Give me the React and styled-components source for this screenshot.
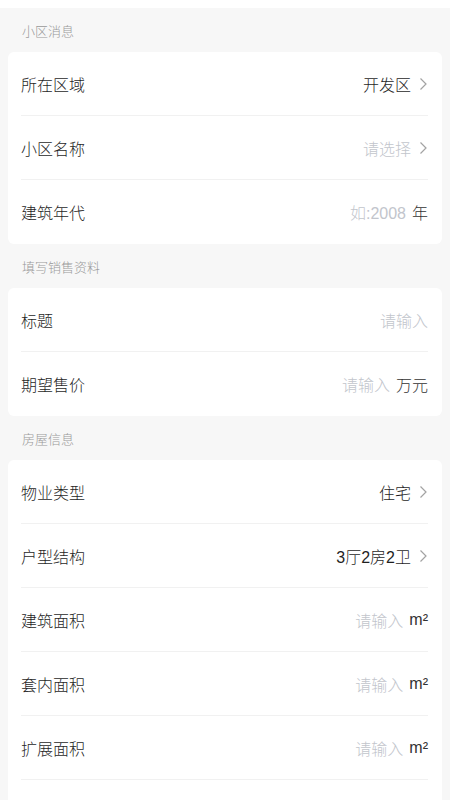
import React from "react";
import styled, { createGlobalStyle } from "styled-components";

const GlobalStyle = createGlobalStyle`
  html, body {
    margin: 0;
    padding: 0;
    background: #f7f7f7;
    font-family: "Liberation Sans", "Noto Sans CJK SC", sans-serif;
  }
`;

const sections = [
  {
    title: "小区消息",
    rows: [
      { label: "所在区域", value: "开发区", arrow: true },
      { label: "小区名称", placeholder: "请选择", arrow: true },
      { label: "建筑年代", placeholder: "如:2008", unit: "年" },
    ],
  },
  {
    title: "填写销售资料",
    rows: [
      { label: "标题", placeholder: "请输入" },
      { label: "期望售价", placeholder: "请输入", unit: "万元" },
    ],
  },
  {
    title: "房屋信息",
    rows: [
      { label: "物业类型", value: "住宅", arrow: true },
      { label: "户型结构", value: "3厅2房2卫", arrow: true },
      { label: "建筑面积", placeholder: "请输入", unit: "m²" },
      { label: "套内面积", placeholder: "请输入", unit: "m²" },
      { label: "扩展面积", placeholder: "请输入", unit: "m²" },
      { label: "所在楼层", placeholder: "请输入", unit: "层" },
    ],
  },
];

const Chevron = () => (
  <ArrowIcon viewBox="0 0 10 14" width="10" height="14">
    <polyline points="2.5,1.5 8,7 2.5,12.5" fill="none" stroke="#a3a3a3" strokeWidth="1.2" />
  </ArrowIcon>
);

export default function App() {
  return (
    <Page>
      <GlobalStyle />
      <TopStrip />
      {sections.map((section) => (
        <Section key={section.title}>
          <SectionTitle>{section.title}</SectionTitle>
          <Card>
            {section.rows.map((row) => (
              <Row key={row.label}>
                <Label>{row.label}</Label>
                <Right>
                  {row.value && <Value>{row.value}</Value>}
                  {row.placeholder && <Placeholder>{row.placeholder}</Placeholder>}
                  {row.unit && <Unit>{row.unit}</Unit>}
                  {row.arrow && <Chevron />}
                </Right>
              </Row>
            ))}
          </Card>
        </Section>
      ))}
    </Page>
  );
}

const Page = styled.div`
  min-height: 800px;
  background: #f7f7f7;
  padding-bottom: 20px;
`;

const TopStrip = styled.div`
  height: 8px;
  background: #ffffff;
`;

const Section = styled.section`
  display: flex;
  flex-direction: column;
`;

const SectionTitle = styled.div`
  height: 44px;
  box-sizing: border-box;
  display: flex;
  align-items: center;
  padding-left: 22px;
  font-size: 13px;
  font-weight: 300;
  color: #999999;
`;

const Card = styled.div`
  margin: 0 8px;
  padding: 0 14px 0 13px;
  background: #ffffff;
  border-radius: 6px;
`;

const Row = styled.div`
  height: 64px;
  display: flex;
  align-items: center;
  justify-content: space-between;
  border-bottom: 1px solid #f1f1f1;
  box-sizing: border-box;
  &:last-child {
    border-bottom: none;
  }
`;

const Label = styled.span`
  font-size: 16px;
  font-weight: 300;
  color: #1f1f1f;
`;

const Right = styled.div`
  display: flex;
  align-items: center;
  gap: 6px;
`;

const Value = styled.span`
  font-size: 16px;
  font-weight: 300;
  color: #1f1f1f;
`;

const Placeholder = styled.span`
  font-size: 16px;
  font-weight: 300;
  color: #c2c5cc;
`;

const Unit = styled.span`
  font-size: 16px;
  font-weight: 300;
  color: #333333;
`;

const ArrowIcon = styled.svg`
  display: block;
  margin-left: 1px;
`;
